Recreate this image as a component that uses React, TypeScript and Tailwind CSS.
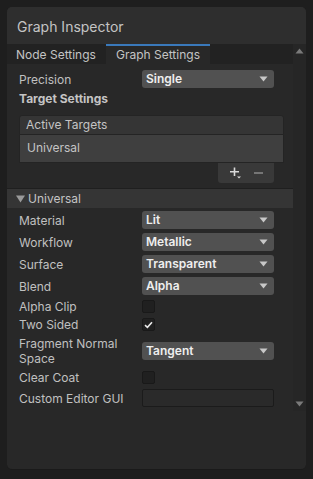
const font = "font-['Inter','Liberation_Sans',sans-serif]";

function Arrow() {
  return (
    <svg width="9" height="6" viewBox="0 0 9 6" className="shrink-0">
      <path d="M0.5 0.5 L8.5 0.5 L4.5 5.5 Z" fill="#c8c8c8" />
    </svg>
  );
}

function Dropdown({ value }: { value: string }) {
  return (
    <div className="flex h-[18px] w-[132px] items-center justify-between rounded-[3px] bg-[#515151] pl-[4px] pr-[6px]">
      <span className="text-[12px] font-semibold text-[#eeeeee]">{value}</span>
      <Arrow />
    </div>
  );
}

function Checkbox({ checked }: { checked?: boolean }) {
  return (
    <div className="flex h-[13px] w-[13px] items-center justify-center rounded-[2px] border border-[#191919] bg-[#202020]">
      {checked && (
        <svg width="9" height="8" viewBox="0 0 9 8">
          <path d="M1 4.2 L3.4 6.4 L8 1.2" stroke="#e8e8e8" strokeWidth="1.6" fill="none" />
        </svg>
      )}
    </div>
  );
}

function Row({ label, h = 22, children }: { label: React.ReactNode; h?: number; children?: React.ReactNode }) {
  return (
    <div className="flex items-center" style={{ height: h }}>
      <div className="w-[123px] text-[12px] leading-[15px] text-[#c0c0c0]">{label}</div>
      {children}
    </div>
  );
}

export default function App() {
  return (
    <div className={`h-[479px] w-[313px] bg-[#1e1e1e] p-[7px] ${font}`}>
      <div className="flex h-[463px] w-[299px] flex-col overflow-hidden rounded-[5px] border-b border-[#1a1a1a] bg-[#282828]">
        <div className="flex h-[37px] shrink-0 items-center bg-[#2e2e2e] pl-[10px] pt-[2px] text-[14px] text-[#c4c4c4]">
          Graph Inspector
        </div>
        <div className="flex h-[367px] shrink-0">
          <div className="flex flex-1 flex-col">
            <div className="flex h-[20px] shrink-0 bg-[#222222] text-[12px] text-[#c4c4c4]">
              <div className="flex w-[99px] items-center pl-[9px] pt-[1px]">Node Settings</div>
              <div className="flex w-[104px] items-center border-t-2 border-[#3a79bb] bg-[#282828] pl-[10px]">
                Graph Settings
              </div>
            </div>
            <div className="flex flex-col pl-[12px] pr-[17px] pt-[5px]">
              <Row label="Precision" h={20}>
                <Dropdown value="Single" />
              </Row>
              <div className="flex h-[20px] items-center text-[12px] font-bold text-[#c4c4c4]">Target Settings</div>
              <div className="mt-[6px] mr-[-8px] flex flex-col">
                <div className="flex h-[20px] items-center rounded-t-[3px] border border-[#242424] bg-[#353535] pl-[6px] text-[12px] text-[#c4c4c4]">
                  Active Targets
                </div>
                <div className="flex h-[28px] items-start border-x border-b border-[#242424] bg-[#3f3f3f] pl-[7px] pt-[4px] text-[12px] text-[#c4c4c4]">
                  Universal
                </div>
                <div className="flex justify-end pr-[10px]">
                  <div className="flex h-[20px] w-[56px] items-center justify-center gap-[13px] rounded-b-[3px] bg-[#393939] text-[#c4c4c4]">
                    <svg width="11" height="12" viewBox="0 0 11 12">
                      <path d="M4.5 0.5 V9 M0 4.8 H9" stroke="#d8d8d8" strokeWidth="1.6" />
                      <path d="M7 9.5 H11 L9 11.5 Z" fill="#d8d8d8" />
                    </svg>
                    <svg width="9" height="2" viewBox="0 0 9 2">
                      <path d="M0 1 H9" stroke="#8a8a8a" strokeWidth="1.4" />
                    </svg>
                  </div>
                </div>
              </div>
            </div>
            <div className="mt-[5px] h-px bg-[#1f1f1f]" />
            <div className="flex h-[19px] items-center gap-[3px] bg-[#353535] pl-[9px] text-[12px] text-[#c4c4c4]">
              <svg width="9" height="8" viewBox="0 0 9 8">
                <path d="M0 0.5 H9 L4.5 7.5 Z" fill="#9a9a9a" />
              </svg>
              Universal
            </div>
            <div className="flex flex-col pl-[12px] pr-[17px] pt-[1px]">
              <Row label="Material"><Dropdown value="Lit" /></Row>
              <Row label="Workflow"><Dropdown value="Metallic" /></Row>
              <Row label="Surface"><Dropdown value="Transparent" /></Row>
              <Row label="Blend"><Dropdown value="Alpha" /></Row>
              <Row label="Alpha Clip" h={18}><Checkbox /></Row>
              <Row label="Two Sided" h={19}><Checkbox checked /></Row>
              <Row label={<>Fragment Normal<br />Space</>} h={34}><Dropdown value="Tangent" /></Row>
              <Row label="Clear Coat" h={19}><Checkbox /></Row>
              <Row label="Custom Editor GUI" h={22}>
                <div className="h-[18px] w-[132px] rounded-[2px] border border-[#1b1b1b] bg-[#2a2a2a]" />
              </Row>
            </div>
          </div>
          <div className="flex w-[13px] flex-col items-center justify-between bg-[#262626] py-[4px]">
            <svg width="9" height="6" viewBox="0 0 9 6">
              <path d="M0.5 5.5 L8.5 5.5 L4.5 0.5 Z" fill="#7a7a7a" />
            </svg>
            <svg width="9" height="6" viewBox="0 0 9 6">
              <path d="M0.5 0.5 L8.5 0.5 L4.5 5.5 Z" fill="#7a7a7a" />
            </svg>
          </div>
        </div>
      </div>
    </div>
  );
}
